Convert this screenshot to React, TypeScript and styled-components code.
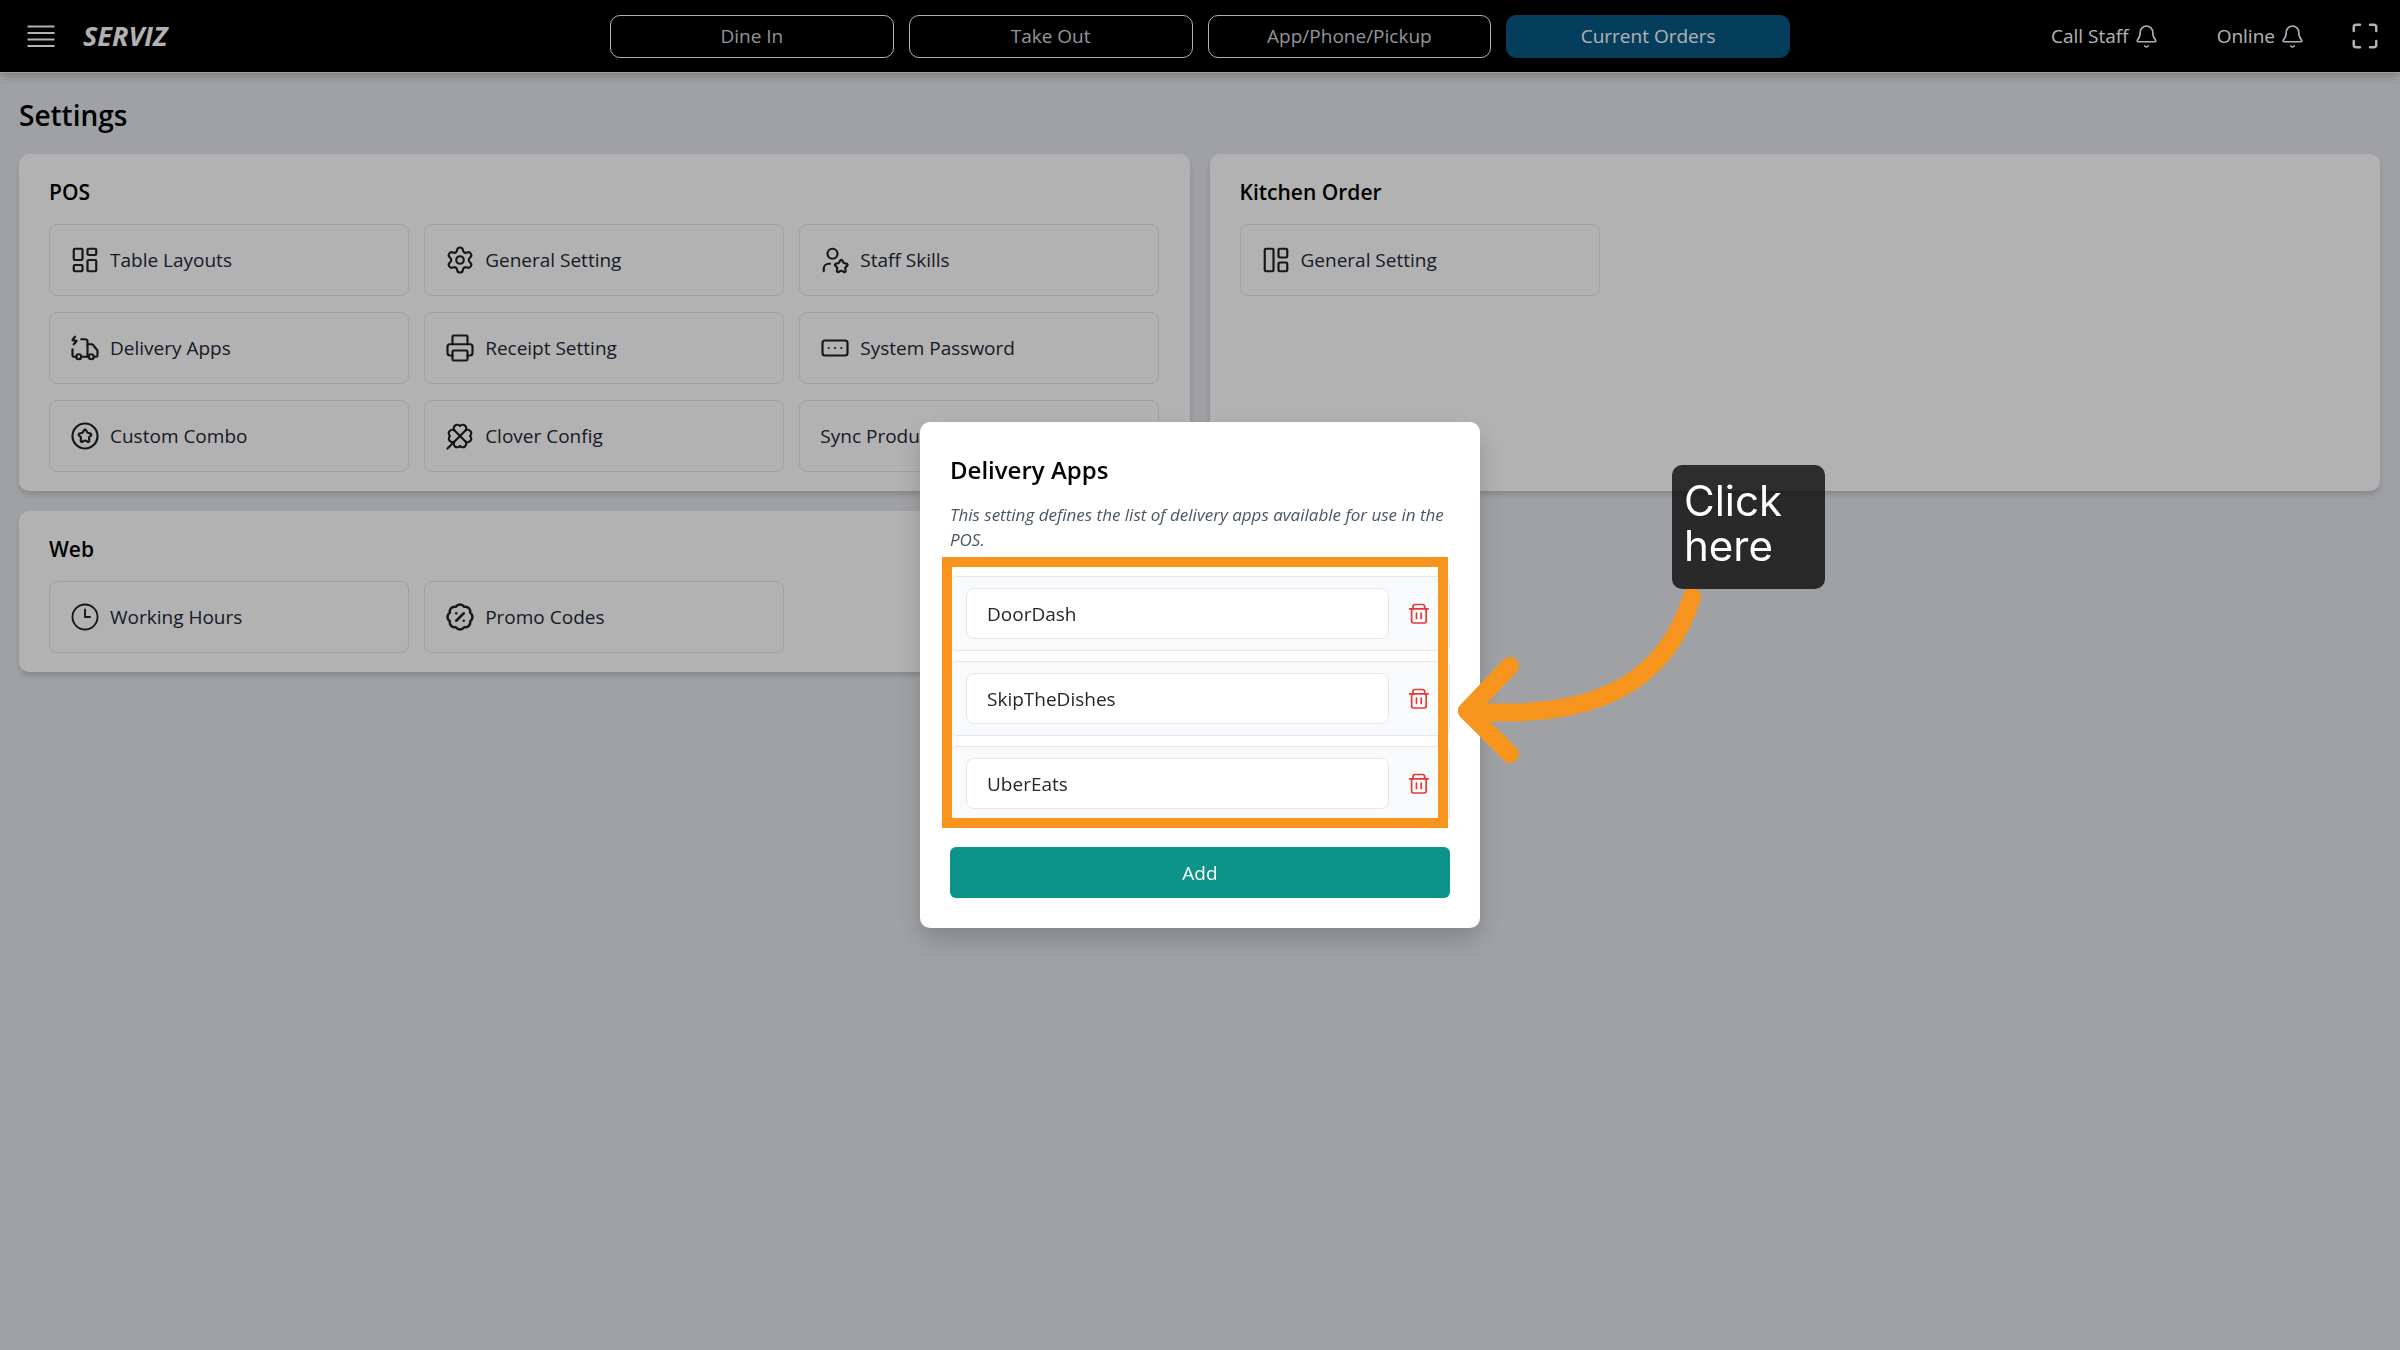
import React, { useState } from "react";
import styled, { createGlobalStyle, css } from "styled-components";
import {
  BadgePercent,
  Bell,
  CircleStar,
  Clock3,
  Clover,
  LayoutDashboard,
  LayoutPanelLeft,
  Maximize,
  Printer,
  RectangleEllipsis,
  Settings,
  TruckElectric,
  UserStar,
  type LucideIcon,
} from "lucide-react";

const GlobalStyle = createGlobalStyle`
  *, *::before, *::after { box-sizing: border-box; }
  body {
    margin: 0;
    background: #e5e7eb;
    color: #000;
    font-family: "Open Sans", "Noto Sans", sans-serif;
    font-size: 19px;
    line-height: 28px;
  }
  h1, h2, p, ul { margin: 0; padding: 0; }
  button, input { font: inherit; }
  button { cursor: pointer; }
`;

const Page = styled.div`
  min-height: 100vh;
`;

/* ---------- top bar ---------- */

const TopBar = styled.header`
  display: grid;
  grid-template-columns: 1fr minmax(0, 1180px) 1fr;
  align-items: center;
  height: 73px;
  padding: 0 13px;
  background: #000;
  border-bottom: 1px solid #e5e7eb;
  box-shadow: 0 4px 8px rgba(0, 0, 0, 0.2);
`;

const Brand = styled.div`
  display: flex;
  align-items: center;
  gap: 14px;
`;

const BarButton = styled.button`
  display: inline-flex;
  align-items: center;
  gap: 5px;
  padding: 0 20px;
  border: 0;
  background: none;
  color: #fff;
`;

const IconButton = styled(BarButton)`
  padding: 7px;
`;

const MenuButton = styled(BarButton)`
  padding: 7px 14px;
`;

const Logo = styled.span`
  color: #fff;
  font-size: 27px;
  line-height: 36px;
  font-weight: 700;
  font-style: italic;
`;

const OrderNav = styled.nav`
  display: grid;
  grid-template-columns: repeat(4, minmax(0, 1fr));
  gap: 15px;
`;

const OrderTab = styled.button<{ $active?: boolean }>`
  height: 43px;
  border: 1px solid #fff;
  border-radius: 10px;
  background: #000;
  color: #d1d5db;
  ${(p) =>
    p.$active &&
    css`
      border-color: #075985;
      background: #075985;
      color: #fff;
    `}
`;

const BarActions = styled.div`
  display: flex;
  justify-content: flex-end;
  align-items: center;
  gap: 18px;
`;

/* ---------- settings page ---------- */

const Content = styled.main`
  padding: 24px 20px 20px 19px;
`;

const PageTitle = styled.h1`
  font-size: 28px;
  line-height: 36px;
  font-weight: 600;
`;

const Panels = styled.div`
  display: grid;
  grid-template-columns: repeat(2, minmax(0, 1fr));
  gap: 20px;
  margin-top: 21px;
`;

const Panel = styled.section`
  padding: 20px 30px 19px;
  border-radius: 10px;
  background: #fff;
  box-shadow: 0 4px 6px -1px rgba(0, 0, 0, 0.18);
`;

const PanelTitle = styled.h2`
  margin-bottom: 14px;
  font-size: 21px;
  line-height: 36px;
  font-weight: 600;
`;

const Tiles = styled.div`
  display: grid;
  grid-template-columns: repeat(3, minmax(0, 1fr));
  gap: 16px 15px;
`;

const Tile = styled.button`
  display: flex;
  align-items: center;
  gap: 10px;
  height: 72px;
  padding: 0 20px;
  border: 1px solid #e5e7eb;
  border-radius: 8px;
  background: #fff;
  color: #1f2937;
  text-align: left;
`;

/* ---------- dialog ---------- */

const Backdrop = styled.div`
  position: fixed;
  inset: 0;
  display: flex;
  align-items: center;
  justify-content: center;
  background: rgba(0, 0, 0, 0.3);
`;

const Dialog = styled.div`
  position: relative;
  width: min(560px, 94vw);
  padding: 30px;
  border-radius: 10px;
  background: #fff;
  box-shadow: 0 12px 24px rgba(0, 0, 0, 0.18);
`;

const DialogTitle = styled.h2`
  font-size: 24px;
  line-height: 36px;
  font-weight: 600;
`;

const DialogText = styled.p`
  margin: 14px 0 24px;
  color: #4b5563;
  font-size: 17px;
  line-height: 25px;
  font-style: italic;
`;

const AppList = styled.ul`
  position: relative;
  display: grid;
  gap: 10px;
  list-style: none;
`;

const AppRow = styled.li`
  display: flex;
  align-items: center;
  gap: 18px;
  padding: 11px 18px 11px 15px;
  border: 1px solid #e5e7eb;
  border-radius: 6px;
  background: #f9fafc;
`;

const AppInput = styled.input`
  flex: 1;
  min-width: 0;
  height: 51px;
  padding: 0 20px;
  border: 1px solid #e5e7eb;
  border-radius: 8px;
  background: #fff;
  color: #262626;
`;

const DeleteButton = styled.button`
  display: flex;
  padding: 0;
  border: 0;
  background: none;
  color: #e53935;
`;

const AddButton = styled.button`
  width: 100%;
  height: 51px;
  margin-top: 26px;
  border: 0;
  border-radius: 6px;
  background: #0d9488;
  color: #fff;
  font-weight: 500;
`;

/* ---------- guide overlay ---------- */

const Highlight = styled.li`
  position: absolute;
  inset: -19px 2px -7px -8px;
  border: 10px solid #f7941d;
  pointer-events: none;
`;

const GuideArrow = styled.svg`
  position: absolute;
  left: 530px;
  top: 160px;
  pointer-events: none;
`;

const GuideTip = styled.div`
  position: absolute;
  left: 752px;
  top: 43px;
  width: 153px;
  height: 124px;
  padding: 13px 12px;
  border-radius: 10px;
  background: rgba(0, 0, 0, 0.75);
  color: #fff;
  font-family: Inter, "Liberation Sans", sans-serif;
  font-size: 42px;
  line-height: 45px;
`;

type TileData = { label: string; icon?: LucideIcon; stroke?: number };

const panels: { title: string; tiles: TileData[] }[] = [
  {
    title: "POS",
    tiles: [
      { label: "Table Layouts", icon: LayoutDashboard },
      { label: "General Setting", icon: Settings },
      { label: "Staff Skills", icon: UserStar },
      { label: "Delivery Apps", icon: TruckElectric },
      { label: "Receipt Setting", icon: Printer },
      { label: "System Password", icon: RectangleEllipsis },
      { label: "Custom Combo", icon: CircleStar },
      { label: "Clover Config", icon: Clover },
      { label: "Sync Products" },
    ],
  },
  {
    title: "Kitchen Order",
    tiles: [{ label: "General Setting", icon: LayoutPanelLeft }],
  },
  {
    title: "Web",
    tiles: [
      { label: "Working Hours", icon: Clock3, stroke: 1.5 },
      { label: "Promo Codes", icon: BadgePercent, stroke: 2 },
    ],
  },
];

const tabs = ["Dine In", "Take Out", "App/Phone/Pickup", "Current Orders"];

function MenuIcon() {
  return (
    <svg width="28" height="28" viewBox="0 0 28 28" stroke="currentColor" strokeWidth="2" aria-hidden="true">
      <path d="M0.5 4.5h27M0.5 11h27M0.5 17.5h27M0.5 24h27" />
    </svg>
  );
}

function TrashIcon() {
  return (
    <svg
      width="24"
      height="24"
      viewBox="0 0 24 24"
      fill="none"
      stroke="currentColor"
      strokeWidth="1.7"
      strokeLinecap="round"
      strokeLinejoin="round"
      aria-hidden="true"
    >
      <path d="M2.6 6.9H21.1" />
      <path d="M6 6.9V4.5a2 2 0 0 1 2-2h7.7a2 2 0 0 1 2 2v2.4" />
      <path d="M4.6 6.9v12.2a1.9 1.9 0 0 0 1.9 1.9h10.8a1.9 1.9 0 0 0 1.9-1.9V6.9" />
      <path d="M9.5 11.2v5.2M14.2 11.2v5.2" />
    </svg>
  );
}

export default function App() {
  const [apps, setApps] = useState(["DoorDash", "SkipTheDishes", "UberEats"]);

  const rename = (index: number, value: string) =>
    setApps(apps.map((name, i) => (i === index ? value : name)));

  return (
    <Page>
      <GlobalStyle />
      <TopBar>
        <Brand>
          <MenuButton aria-label="Menu">
            <MenuIcon />
          </MenuButton>
          <Logo>SERVIZ</Logo>
        </Brand>
        <OrderNav>
          {tabs.map((tab) => (
            <OrderTab key={tab} $active={tab === "Current Orders"}>
              {tab}
            </OrderTab>
          ))}
        </OrderNav>
        <BarActions>
          <BarButton>
            Call Staff <Bell size={25} strokeWidth={1.5} />
          </BarButton>
          <BarButton>
            Online <Bell size={25} strokeWidth={1.5} />
          </BarButton>
          <IconButton aria-label="Full screen">
            <Maximize size={30} strokeWidth={2} />
          </IconButton>
        </BarActions>
      </TopBar>

      <Content>
        <PageTitle>Settings</PageTitle>
        <Panels>
          {panels.map((panel) => (
            <Panel key={panel.title}>
              <PanelTitle>{panel.title}</PanelTitle>
              <Tiles>
                {panel.tiles.map(({ label, icon: Icon, stroke = 1.75 }) => (
                  <Tile key={label}>
                    {Icon && <Icon size={30} strokeWidth={stroke} color="#222" />}
                    {label}
                  </Tile>
                ))}
              </Tiles>
            </Panel>
          ))}
        </Panels>
      </Content>

      <Backdrop>
        <Dialog role="dialog" aria-labelledby="dialog-title">
          <DialogTitle id="dialog-title">Delivery Apps</DialogTitle>
          <DialogText>
            This setting defines the list of delivery apps available for use in the POS.
          </DialogText>
          <AppList>
            {apps.map((name, i) => (
              <AppRow key={i}>
                <AppInput
                  aria-label={`Delivery app ${i + 1}`}
                  value={name}
                  onChange={(e) => rename(i, e.target.value)}
                />
                <DeleteButton
                  aria-label={`Delete ${name}`}
                  onClick={() => setApps(apps.filter((_, j) => j !== i))}
                >
                  <TrashIcon />
                </DeleteButton>
              </AppRow>
            ))}
            <Highlight aria-hidden="true" />
          </AppList>
          <AddButton onClick={() => setApps([...apps, ""])}>Add</AddButton>

          <GuideArrow
            width="260"
            height="190"
            viewBox="0 0 260 190"
            fill="none"
            stroke="#f7941d"
            strokeWidth="18"
            strokeLinecap="round"
            strokeLinejoin="round"
            aria-hidden="true"
          >
            <path d="M242 15C218 93 155 140 17 129" />
            <path d="M60 84L17 129L60 172" />
          </GuideArrow>
          <GuideTip>Click here</GuideTip>
        </Dialog>
      </Backdrop>
    </Page>
  );
}
